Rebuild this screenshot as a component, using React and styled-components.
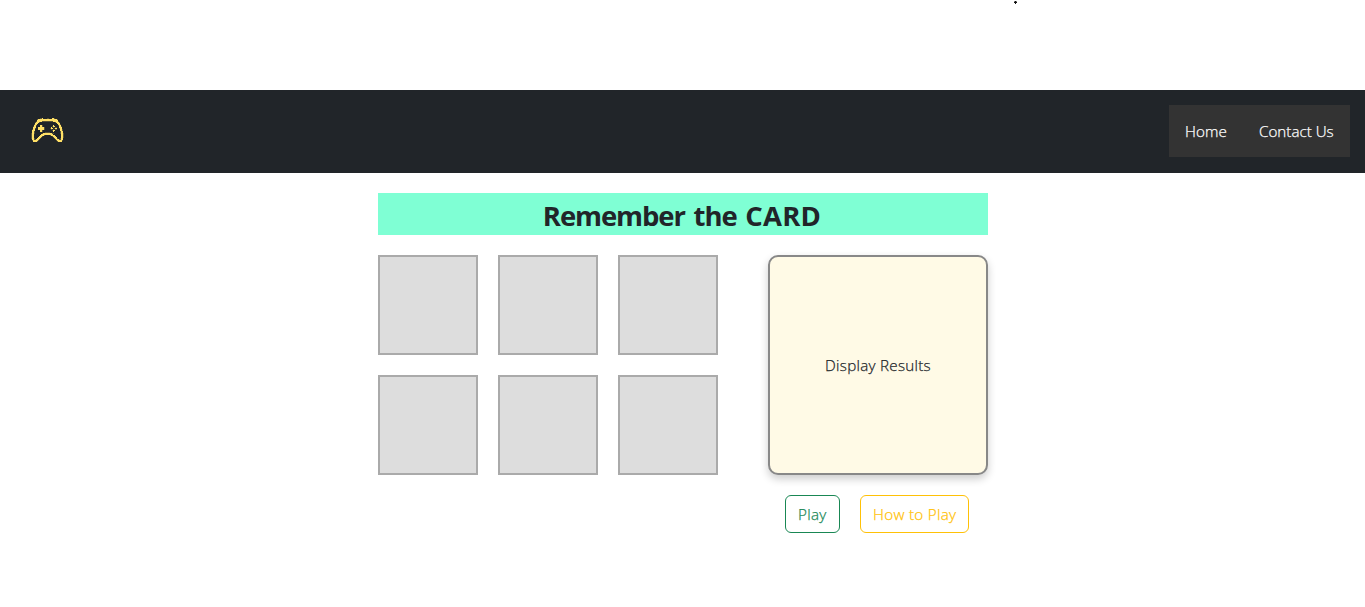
import React from "react";
import styled, { createGlobalStyle } from "styled-components";
import { BsController } from "react-icons/bs";

const GlobalStyle = createGlobalStyle`
  *, *::before, *::after { box-sizing: border-box; }
  body {
    margin: 0;
    background: #fff;
    color: #212529;
    font-family: "Open Sans", "Noto Sans", sans-serif;
    font-size: 15.2px;
    line-height: 24px;
    overflow: hidden;
  }
`;

const Page = styled.div`
  height: 607px;
`;

const TopSpace = styled.div`
  height: 90px;
  padding-left: 1014px;
`;

const Dot = styled.svg`
  display: block;
`;

const Header = styled.header`
  display: flex;
  align-items: flex-start;
  justify-content: space-between;
  height: 83px;
  padding: 15px 15px 0 31px;
  background: #212529;
`;

const Logo = styled(BsController)`
  display: block;
  width: 33px;
  height: 33px;
  margin-top: 9px;
  color: #ffe066;
  shape-rendering: crispEdges;
  stroke-width: 0.12;
`;

const Nav = styled.nav`
  display: flex;
  height: 52px;
  background: #333;
`;

const Label = styled.span`
  display: inline-block;
  font-weight: 300;
  letter-spacing: ${(p) => p.$spacing || "0"};
  white-space: nowrap;
  -webkit-text-stroke: 0.25px currentColor;
`;

const NavLink = styled.a`
  width: ${(p) => p.$width};
  padding: 14px 0 14px 16px;
  color: #fff;
  text-decoration: none;
`;

const Game = styled.main`
  width: 610px;
  margin: 20px auto 0 378px;
`;

const Title = styled.h1`
  height: 42px;
  margin: 0 0 20px;
  padding: 4px 2px 0 0;
  background: #7fffd4;
  text-align: center;
  font-size: 27.5px;
  line-height: 38px;
  font-weight: 700;
  letter-spacing: -1.1px;
  word-spacing: 2.7px;
`;

const TitleAccent = styled.span`
  letter-spacing: 0.2px;
`;

const Board = styled.div`
  display: flex;
  justify-content: space-between;
`;

const Cards = styled.div`
  display: grid;
  grid-template-columns: repeat(3, 100px);
  grid-auto-rows: 100px;
  gap: 20px;
`;

const Card = styled.div`
  border: 2px solid #aaa;
  background: #ddd;
`;

const Results = styled.div`
  display: flex;
  align-items: center;
  justify-content: center;
  width: 220px;
  height: 220px;
  border: 2px solid #888;
  border-radius: 10px;
  background: #fffae6;
  box-shadow: 0 4px 8px rgba(0, 0, 0, 0.2);
`;

const Actions = styled.div`
  display: flex;
  gap: 20px;
  margin: 20px 0 0 407px;
`;

const Button = styled.button`
  width: ${(p) => p.$width};
  height: 38px;
  padding: 0 0 0 12px;
  border: 1px solid ${(p) => p.$color};
  border-radius: 6px;
  background: transparent;
  color: ${(p) => p.$color};
  font: inherit;
  text-align: left;
`;

export default function App() {
  return (
    <Page>
      <GlobalStyle />
      <TopSpace>
        <Dot width="3" height="4" viewBox="0 0 3 4" shapeRendering="crispEdges" aria-hidden="true">
          <path d="M0 1h3v2H0z" fill="#888" />
          <path d="M1 1h1v3H1zM0 2h3v1H0z" fill="#111" />
        </Dot>
      </TopSpace>
      <Header>
        <Logo aria-label="Game controller" />
        <Nav>
          <NavLink $width="74px"><Label $spacing="0.1px">Home</Label></NavLink>
          <NavLink $width="107px"><Label>Contact Us</Label></NavLink>
        </Nav>
      </Header>
      <Game>
        <Title>Remember the <TitleAccent>CARD</TitleAccent></Title>
        <Board>
          <Cards>
            {Array.from({ length: 6 }, (_, i) => <Card key={i} />)}
          </Cards>
          <Results><Label $spacing="0.28px">Display Results</Label></Results>
        </Board>
        <Actions>
          <Button $width="55px" $color="#198754"><Label $spacing="0.3px">Play</Label></Button>
          <Button $width="109px" $color="#ffc107"><Label $spacing="0.3px">How to Play</Label></Button>
        </Actions>
      </Game>
    </Page>
  );
}
